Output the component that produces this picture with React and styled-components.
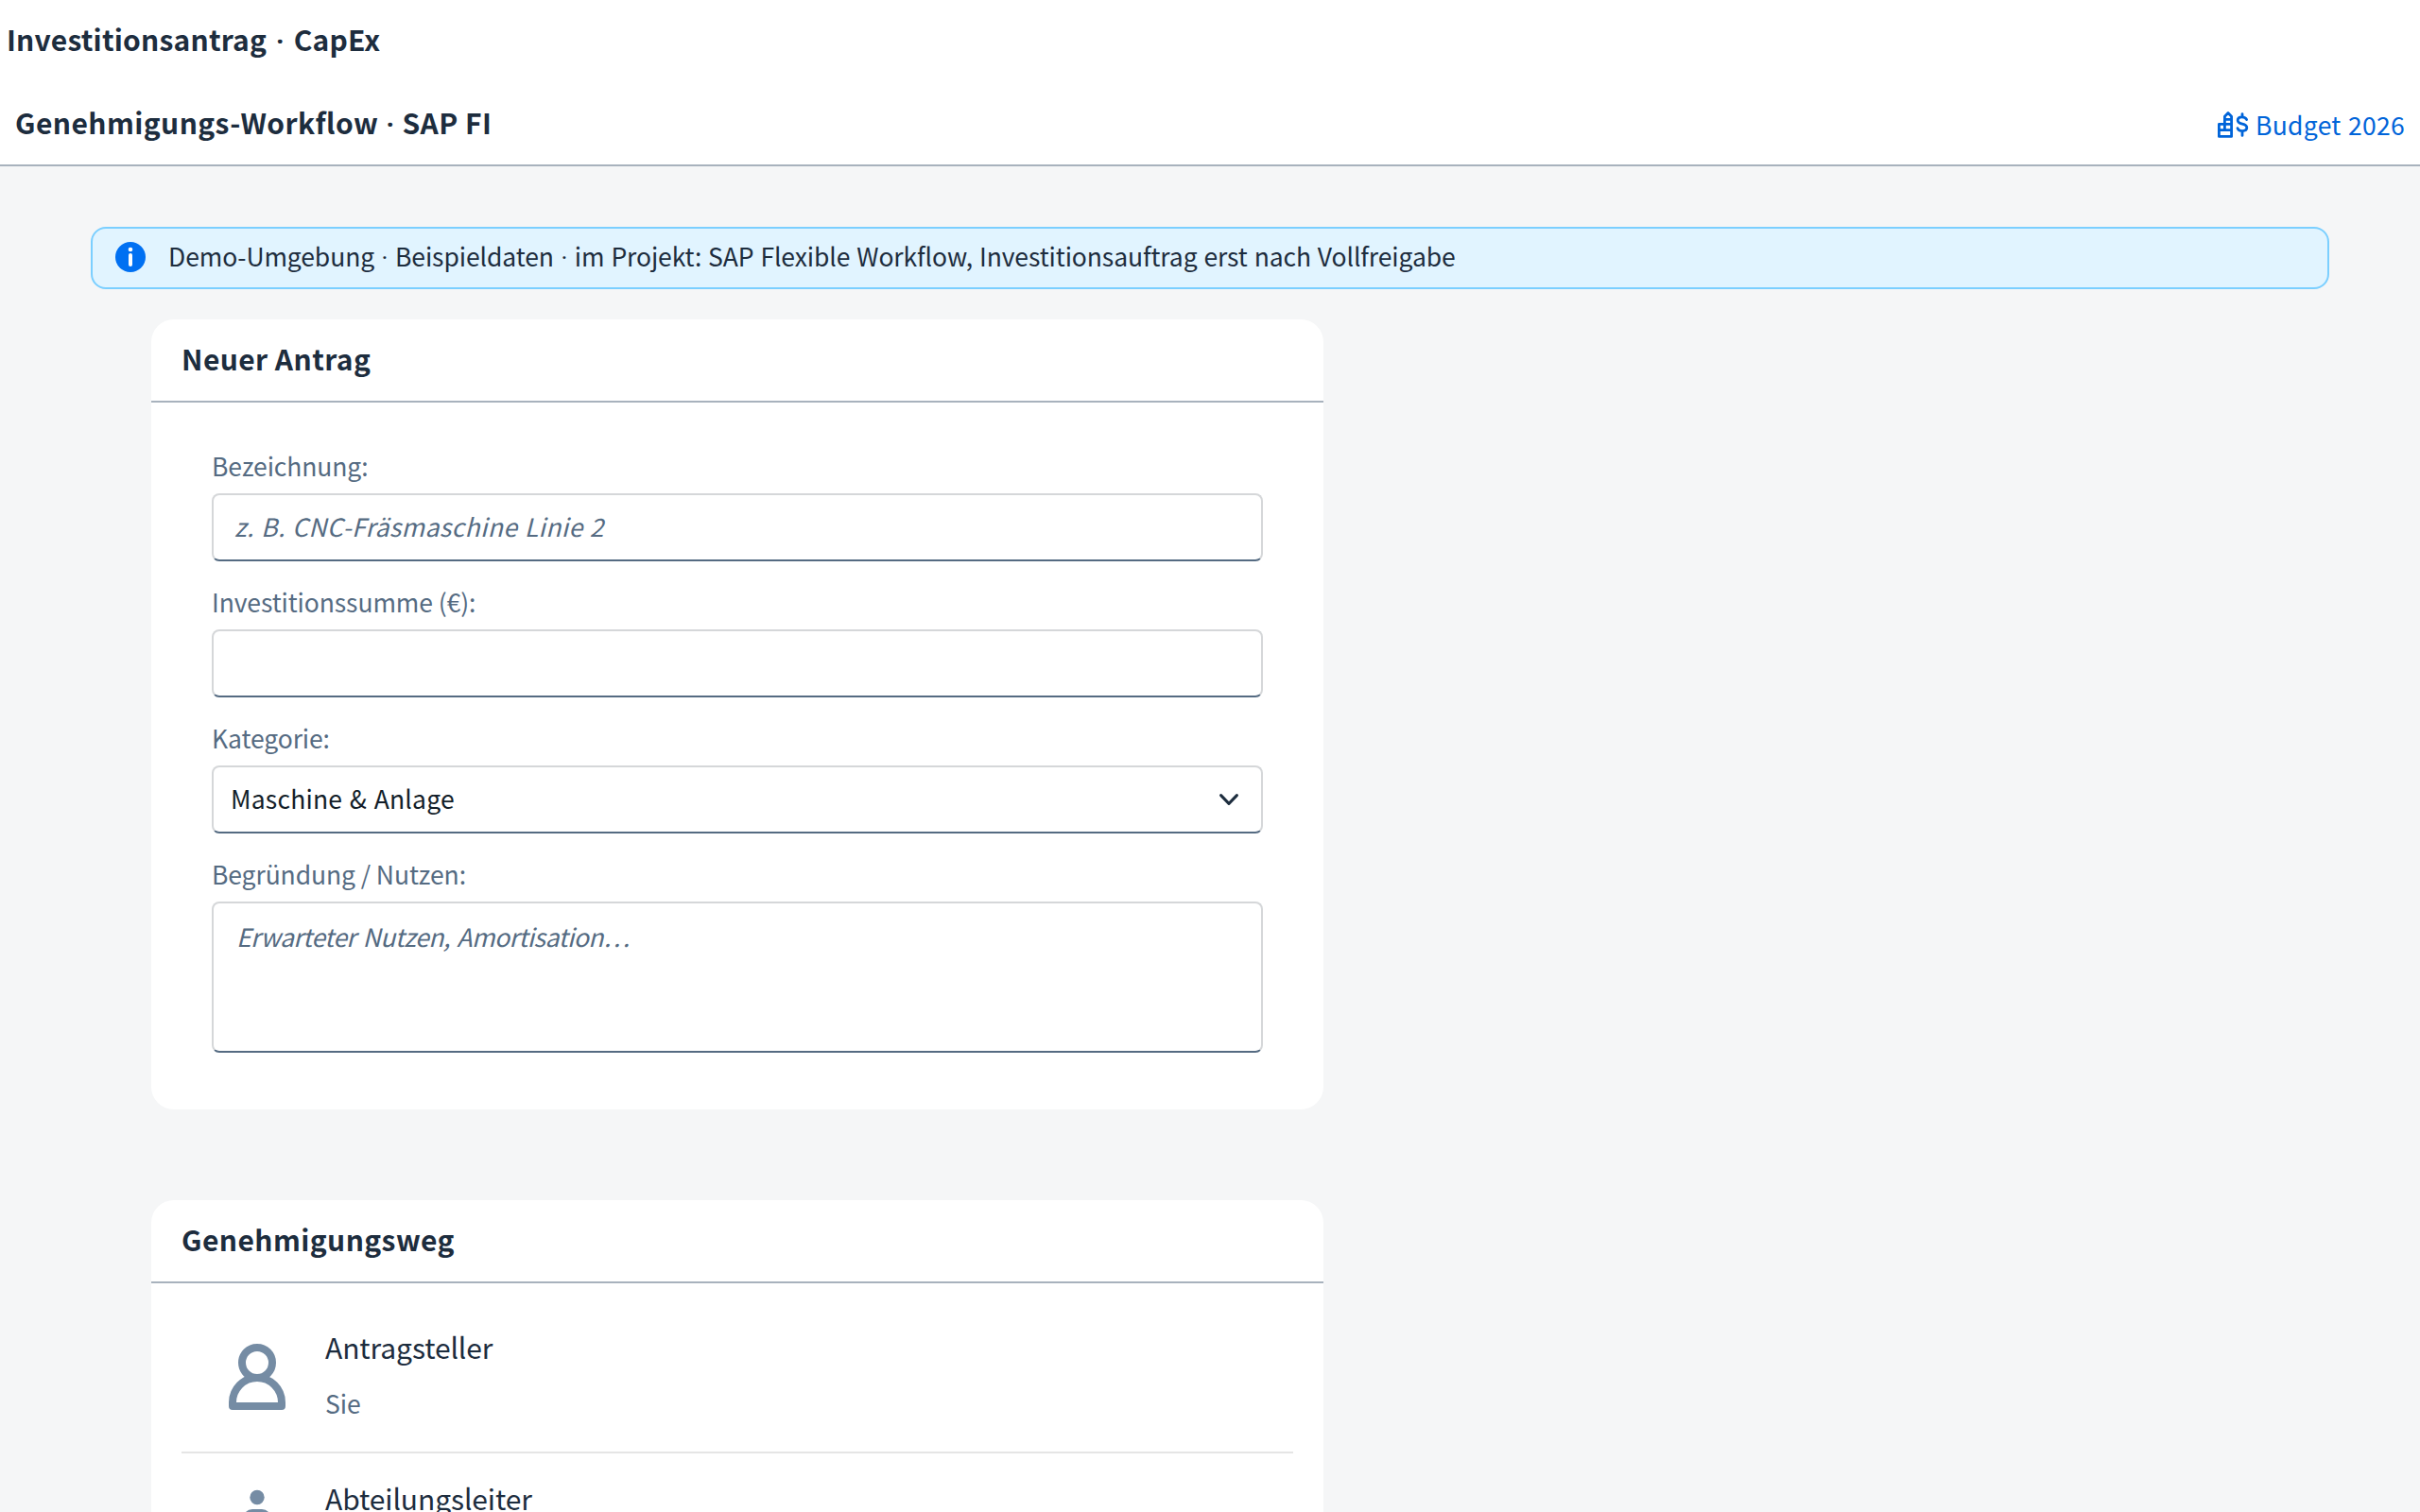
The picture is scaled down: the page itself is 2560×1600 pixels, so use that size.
import React from 'react'
import styled, { createGlobalStyle, css } from 'styled-components'

const GlobalStyle = createGlobalStyle`
* {
    box-sizing: border-box;
}

body {
    margin: 0;
    background-color: #f5f6f7;
    color: #1d2d3e;
    font-family: "Noto Sans CJK SC", "Noto Sans", sans-serif;
    font-size: 26.5px;
    letter-spacing: -0.1px;
    word-spacing: 1.1px;
}
`

const Page = styled.div`
    height: 1600px;
    overflow: hidden;
`

const Header = styled.header`
    background-color: #fff;
    border-bottom: 2px solid #a8b2bd;
`

const Bar = styled.div`
    display: flex;
    justify-content: space-between;
    height: ${(p) => (p.$sub ? '86px' : '88px')};
    padding: ${(p) => (p.$sub ? '0 16px' : '0 7px')};
`

const Title = styled.h2`
    margin: 0;
    font-size: 30px;
    font-weight: 700;
    line-height: 82px;
    letter-spacing: ${(p) => (p.$tight ? '0.2px' : '0.42px')};
    word-spacing: ${(p) => (p.$tight ? '2px' : '0')};
    white-space: nowrap;
`

const Dot = styled.span`
    font-family: Roboto, sans-serif;
`

const BudgetLink = styled.a`
    display: flex;
    gap: 6px;
    color: #0064d9;
    line-height: 87px;
    letter-spacing: 0.3px;

    svg {
        margin-top: 30px;
    }
`

const Strip = styled.div`
    display: flex;
    height: 66px;
    margin: 64px 96px 32px;
    padding-left: 24px;
    background-color: #e1f4ff;
    border: 2px solid #7bcfff;
    border-radius: 16px;
    line-height: 58px;

    svg {
        margin: 14px 24px 0 0;
    }
`

const Card = styled.section`
    width: 1240px;
    margin: 0 0 96px 160px;
    background-color: #fff;
    border-radius: 24px;
`

const CardHeader = styled.div`
    height: 88px;
    padding: 0 32px;
    border-bottom: 2px solid #a8b2bd;
`

const Form = styled.form`
    display: flex;
    flex-direction: column;
    gap: 20px;
    padding: 44px 64px 60px;
`

const Field = styled.div`
    display: flex;
    flex-direction: column;
`

const Label = styled.label`
    height: 52px;
    color: #556b82;
    line-height: 45px;
    word-spacing: 0;
`

const box = css`
    width: 100%;
    background-color: #fff;
    border: 2px solid #d5d7d9;
    border-bottom-color: #556b82;
    border-radius: 8px;
    outline: none;
    font: inherit;

    &::placeholder {
        color: #556b82;
        font-style: italic;
        opacity: 1;
    }
`

const Input = styled.input`
    ${box}
    height: 72px;
    padding: 0 22px 4px;
    letter-spacing: 0.4px;
    word-spacing: 1px;
`

const Textarea = styled.textarea`
    ${box}
    height: 160px;
    padding: 15px 24px;
    line-height: 40px;
    letter-spacing: -0.5px;
    word-spacing: 2px;
    resize: none;
`

const Select = styled.div`
    ${box}
    display: flex;
    justify-content: space-between;
    height: 72px;
    padding: 0 24px 0 18px;
    color: #131e29;
    line-height: 65px;
    letter-spacing: 0.2px;
    word-spacing: 1.5px;

    svg {
        margin-top: 28px;
    }
`

const List = styled.div`
    padding: 20px 32px 0;
`

const Row = styled.div`
    display: flex;
    height: 160px;
    border-bottom: 2px solid #e5e5e5;
`

const RowText = styled.div`
    display: flex;
    flex-direction: column;
    gap: 16px;
    padding-top: 25px;
    line-height: 44px;
`

const RowTitle = styled.div`
    font-size: 30px;
`

const RowInfo = styled.div`
    color: #556b82;
`

const BudgetIcon = () => (
    <svg width="34" height="30" viewBox="0 0 34 30" fill="none" stroke="#0064d9" strokeWidth="2.8" strokeLinejoin="round" strokeLinecap="round">
        <path d="M7.4 12.6V5.2L11 1.6l3.6 3.6v21.2H1.4V13.4h13M7.4 8.4h7M1.4 19.6h13.2M7.4 13v6.6" />
        <path d="M30.6 8.6c-.8-2-2.4-2.8-5-2.8-2.8 0-4.4 1.4-4.4 3.5 0 2.6 2.2 3.3 4.8 3.9s4.8 1.5 4.8 3.9c0 2.3-2 3.5-4.8 3.5-2.6 0-4.4-1-5-3M26 2.6v3M26 21v4.4" />
    </svg>
)

const InfoIcon = () => (
    <svg width="32" height="32" viewBox="0 0 32 32">
        <circle cx="16" cy="16" r="16" fill="#0070f2" />
        <circle cx="16" cy="8" r="2.3" fill="#fff" />
        <rect x="14" y="12" width="4" height="14" rx="2" fill="#fff" />
    </svg>
)

const ChevronIcon = () => (
    <svg width="20" height="14" viewBox="0 0 20 14" fill="none" stroke="#1d2d3e" strokeWidth="3" strokeLinecap="round" strokeLinejoin="round">
        <path d="M1.6 1.6L10 10.4l8.4-8.8" />
    </svg>
)

const PersonIcon = () => (
    <svg width="152" height="158" fill="none" stroke="#758ca4" strokeWidth="8" strokeLinejoin="round">
        <circle cx="80" cy="64" r="16" />
        <path d="M54 110v-4a26 26 0 0 1 52 0v4z" />
    </svg>
)

const ManagerIcon = () => (
    <svg width="152" height="158" fill="#758ca4">
        <circle cx="80" cy="46.5" r="7.7" />
        <rect x="65" y="59" width="30" height="40" rx="10" />
    </svg>
)

const sep = <Dot> · </Dot>

function App() {
    return (
        <Page>
            <GlobalStyle />
            <Header>
                <Bar>
                    <Title $tight>Investitionsantrag{sep}CapEx</Title>
                </Bar>
                <Bar $sub>
                    <Title>Genehmigungs-Workflow{sep}SAP FI</Title>
                    <BudgetLink>
                        <BudgetIcon />
                        Budget 2026
                    </BudgetLink>
                </Bar>
            </Header>
            <Strip>
                <InfoIcon />
                <span>Demo-Umgebung{sep}Beispieldaten{sep}im Projekt: SAP Flexible Workflow, Investitionsauftrag erst nach Vollfreigabe</span>
            </Strip>
            <Card>
                <CardHeader>
                    <Title>Neuer Antrag</Title>
                </CardHeader>
                <Form>
                    <Field>
                        <Label>Bezeichnung:</Label>
                        <Input placeholder="z. B. CNC-Fräsmaschine Linie 2" />
                    </Field>
                    <Field>
                        <Label>Investitionssumme (€):</Label>
                        <Input />
                    </Field>
                    <Field>
                        <Label>Kategorie:</Label>
                        <Select>
                            Maschine &amp; Anlage
                            <ChevronIcon />
                        </Select>
                    </Field>
                    <Field>
                        <Label>Begründung / Nutzen:</Label>
                        <Textarea placeholder="Erwarteter Nutzen, Amortisation…" />
                    </Field>
                </Form>
            </Card>
            <Card>
                <CardHeader>
                    <Title>Genehmigungsweg</Title>
                </CardHeader>
                <List>
                    <Row>
                        <PersonIcon />
                        <RowText>
                            <RowTitle>Antragsteller</RowTitle>
                            <RowInfo>Sie</RowInfo>
                        </RowText>
                    </Row>
                    <Row>
                        <ManagerIcon />
                        <RowText>
                            <RowTitle>Abteilungsleiter</RowTitle>
                        </RowText>
                    </Row>
                </List>
            </Card>
        </Page>
    )
}

export default App
